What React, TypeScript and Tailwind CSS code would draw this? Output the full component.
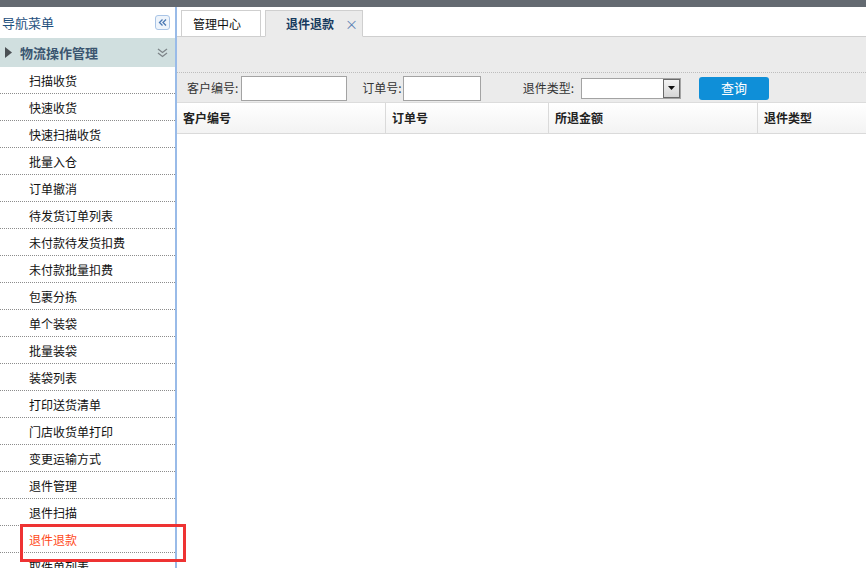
import React from 'react';

const font = { fontFamily: '"Noto Sans CJK SC", "Liberation Sans", sans-serif' };

const menuItems = [
  '扫描收货',
  '快速收货',
  '快速扫描收货',
  '批量入仓',
  '订单撤消',
  '待发货订单列表',
  '未付款待发货扣费',
  '未付款批量扣费',
  '包裹分拣',
  '单个装袋',
  '批量装袋',
  '装袋列表',
  '打印送货清单',
  '门店收货单打印',
  '变更运输方式',
  '退件管理',
  '退件扫描',
  '退件退款',
  '取件单列表',
];

const columns = [
  { label: '客户编号', w: 'w-[209px]' },
  { label: '订单号', w: 'w-[163px]' },
  { label: '所退金额', w: 'w-[209px]' },
  { label: '退件类型', w: 'flex-1' },
];

function Sidebar() {
  return (
    <div className="w-[177px] shrink-0 border-r-2 border-[#99bbe8] bg-white flex flex-col overflow-hidden">
      {/* header */}
      <div className="h-[31px] shrink-0 flex items-center justify-between pl-[2px] pr-[5px]">
        <span className="text-[13px] text-[#1e4f7d]">导航菜单</span>
        <button className="w-[15px] h-[15px] rounded-[3px] border border-[#a9c4e6] bg-[#eef4fb] flex items-center justify-center">
          <svg width="9" height="9" viewBox="0 0 9 9" fill="none" stroke="#4a78b4" strokeWidth="1.3">
            <path d="M4.5 1.5 L1.5 4.5 L4.5 7.5" />
            <path d="M8 1.5 L5 4.5 L8 7.5" />
          </svg>
        </button>
      </div>
      {/* section */}
      <div className="h-[29px] shrink-0 bg-[#d0dfdf] flex items-center pl-[5px] pr-[7px]">
        <svg width="7" height="11" viewBox="0 0 7 11">
          <path d="M0 0 L7 5.5 L0 11 Z" fill="#4b5054" />
        </svg>
        <span className="ml-[8px] text-[13px] font-bold text-[#3b5670] flex-1">物流操作管理</span>
        <svg width="11" height="10" viewBox="0 0 11 10" fill="none" stroke="#7d8488" strokeWidth="1.3">
          <path d="M1 1 L5.5 4.5 L10 1" />
          <path d="M1 5 L5.5 8.5 L10 5" />
        </svg>
      </div>
      {/* items */}
      <ul className="flex flex-col shrink-0">
        {menuItems.map((item) => (
          <li
            key={item}
            className={`h-[27px] shrink-0 border-b border-dotted border-[#8c8c8c] flex items-center pl-[29px] pt-[2px] text-[12px] ${
              item === '退件退款' ? 'text-[#ff4a1a]' : 'text-[#111]'
            }`}
          >
            {item}
          </li>
        ))}
      </ul>
    </div>
  );
}

function Tabs() {
  return (
    <div className="h-[30px] shrink-0 bg-white flex items-end pl-[4px] border-b border-[#cfcfcf]">
      <div className="h-[27px] w-[80px] -mb-px border border-[#cfcfcf] bg-white flex items-center pl-[11px] text-[12px] text-[#111]">
        管理中心
      </div>
      <div className="h-[27px] w-[98px] ml-[4px] -mb-px border border-[#cfcfcf] border-b-[#ebebeb] bg-[#ebebeb] flex items-center pl-[20px] text-[12px] font-semibold text-[#173a5e]">
        <span>退件退款</span>
        <span className="ml-[11px] text-[13px] font-normal text-[#5a7fb3]">×</span>
      </div>
    </div>
  );
}

function Toolbar() {
  return (
    <div className="shrink-0 bg-[#ebebeb] border-b border-[#dcdcdc]">
      <div className="h-[36px] border-b border-dotted border-[#bdbdbd]" />
      <div className="h-[29px] flex items-center pl-[10px] pt-[1px] text-[12px] text-[#333]">
        <span>客户编号:</span>
        <div className="ml-[3px] w-[106px] h-[25px] bg-white border border-[#a3a3a3]" />
        <span className="ml-[15px]">订单号:</span>
        <div className="ml-[1px] w-[78px] h-[25px] bg-white border border-[#a3a3a3]" />
        <span className="ml-[42px]">退件类型:</span>
        <div className="ml-[7px] w-[100px] h-[21px] bg-white border border-[#a3a3a3] flex justify-end">
          <div className="w-[17px] h-full border border-[#6a6a6a] bg-gradient-to-b from-[#f4f4f4] to-[#d6d6d6] flex items-center justify-center">
            <svg width="7" height="4" viewBox="0 0 7 4">
              <path d="M0 0 L7 0 L3.5 4 Z" fill="#111" />
            </svg>
          </div>
        </div>
        <button className="ml-[18px] w-[70px] h-[23px] rounded-[3px] bg-[#0f8fd8] text-white text-[13px] flex items-center justify-center">
          查询
        </button>
      </div>
    </div>
  );
}

function TableHeader() {
  return (
    <div className="h-[31px] shrink-0 flex bg-gradient-to-b from-white to-[#f3f3f3] border-b border-[#dadada]">
      {columns.map((c, i) => (
        <div
          key={c.label}
          className={`${c.w} shrink-0 flex items-center pl-[6px] text-[12px] font-semibold text-[#222] ${
            i < columns.length - 1 ? 'border-r border-[#dadada]' : ''
          }`}
        >
          {c.label}
        </div>
      ))}
    </div>
  );
}

export default function App() {
  return (
    <div className="relative w-[866px] h-[568px] overflow-hidden bg-white flex flex-col" style={font}>
      <div className="h-[7px] shrink-0 bg-[#646a71]" />
      <div className="flex flex-1 min-h-0">
        <Sidebar />
        <div className="flex-1 flex flex-col min-w-0">
          <Tabs />
          <Toolbar />
          <TableHeader />
          <div className="flex-1 bg-white" />
        </div>
      </div>
      {/* highlight box */}
      <div className="absolute left-[20px] top-[524px] w-[166px] h-[38px] border-[3px] border-[#ee3333] pointer-events-none" />
    </div>
  );
}
